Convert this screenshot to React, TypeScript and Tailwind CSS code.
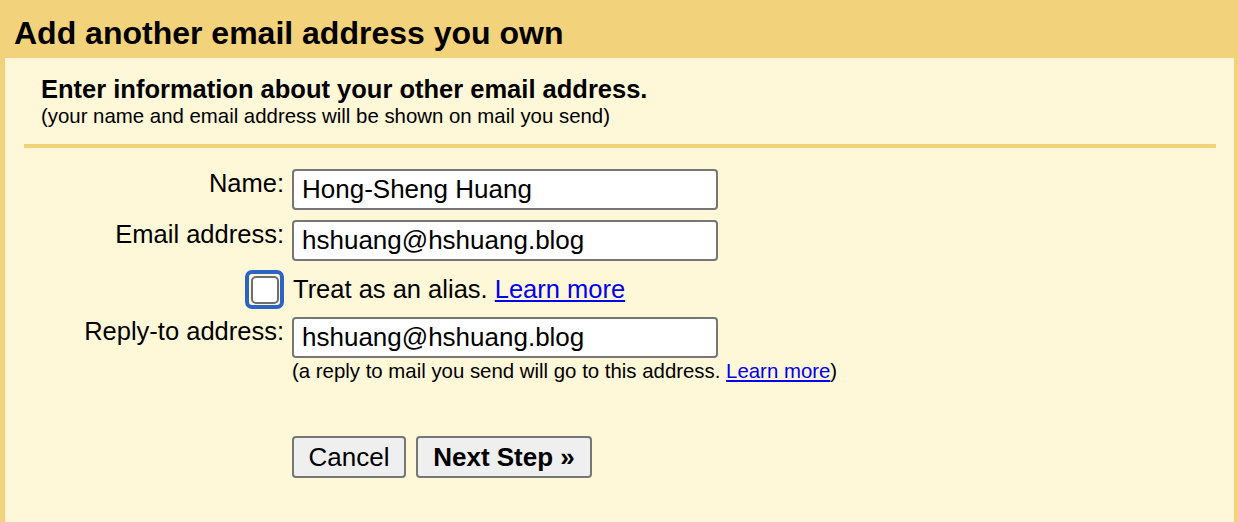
export default function App() {
  const label = 'text-right text-[25.5px] leading-[28px] whitespace-nowrap'
  const field =
    'h-[41px] w-[426px] rounded-[4px] border-2 border-[#767676] bg-white px-[8px] text-[26px] leading-[30px] text-black outline-none'

  return (
    <div className="h-[522px] w-[1238px] overflow-hidden bg-[#f2d27b] pl-[5px] pr-[4px] font-['Liberation_Sans',Arial,sans-serif] text-black">
      <div className="h-[58px] pl-[9px] pt-[17px] text-[32px] font-bold leading-[32px]">
        Add another email address you own
      </div>

      <div className="h-[464px] bg-[#fef7d8]">
        <div className="pl-[36px] pt-[16px]">
          <div className="text-[25.5px] font-bold leading-[30px]">Enter information about your other email address.</div>
          <div className="text-[20.4px] leading-[24px]">(your name and email address will be shown on mail you send)</div>
        </div>

        <div className="mx-[19px] mr-[18px] mt-[16px] h-[4px] bg-[#f2d27b]" />

        <div className="mt-[21px] grid grid-cols-[279px_auto] gap-x-[8px]">
          <div className={label}>Name:</div>
          <div>
            <input className={field} defaultValue="Hong-Sheng Huang" />
          </div>

          <div className={`${label} mt-[10px]`}>Email address:</div>
          <div className="mt-[10px]">
            <input className={field} defaultValue="hshuang@hshuang.blog" />
          </div>

          <div className="mt-[9px] flex justify-end">
            <div className="flex h-[39px] w-[39px] items-center justify-center rounded-[7px] border-[4px] border-[#2d63c4]">
              <div className="h-[28px] w-[28px] rounded-[5px] border-2 border-[#6e6e6e] bg-white" />
            </div>
          </div>
          <div className="mt-[9px] flex h-[39px] items-center pl-[1px] text-[25.5px]">
            Treat as an alias.&nbsp;
            <a href="#" className="text-[#0000ee] underline">
              Learn more
            </a>
          </div>

          <div className={`${label} mt-[8px]`}>Reply-to address:</div>
          <div className="mt-[8px]">
            <input className={field} defaultValue="hshuang@hshuang.blog" />
            <div className="mt-[1px] text-[20.4px] leading-[24px]">
              (a reply to mail you send will go to this address.{' '}
              <a href="#" className="text-[#0000ee] underline">
                Learn more
              </a>
              )
            </div>
          </div>

          <div />
          <div className="mt-[53px] flex gap-[10px]">
            <button className="h-[42px] w-[114px] rounded-[4px] border-2 border-[#767676] bg-[#efefef] text-[26px] leading-[30px]">
              Cancel
            </button>
            <button className="h-[42px] w-[176px] rounded-[4px] border-2 border-[#767676] bg-[#efefef] text-[26px] font-bold leading-[30px]">
              Next Step »
            </button>
          </div>
        </div>
      </div>
    </div>
  )
}
